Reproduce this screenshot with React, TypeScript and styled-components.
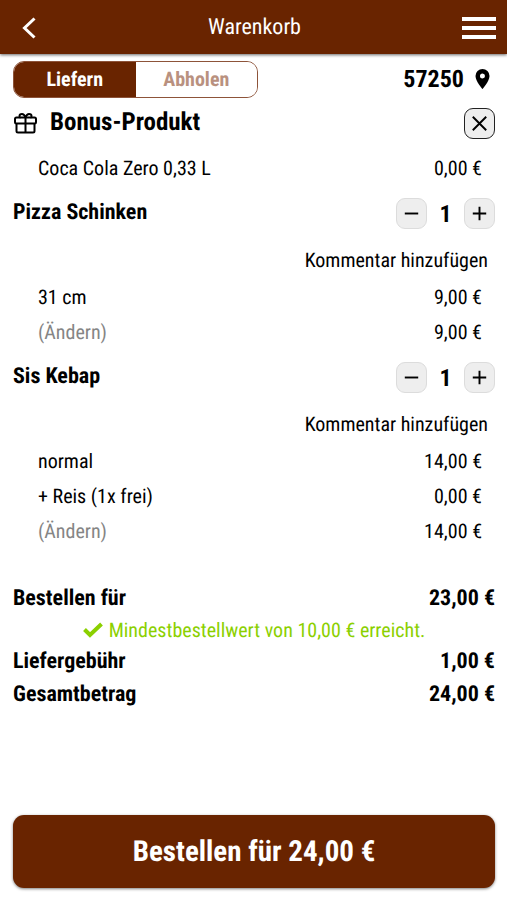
import React, { useState } from "react";
import styled, { createGlobalStyle, css } from "styled-components";

const BROWN = "#692400";
const FONT = '"Roboto Condensed", "Liberation Sans Narrow", Roboto, sans-serif';

const GlobalStyle = createGlobalStyle`
  *, *::before, *::after { box-sizing: border-box; }
  body { margin: 0; background: #fff; color: #000; font-family: ${FONT}; font-size: 20px; text-rendering: geometricPrecision; }
  button { font: inherit; color: inherit; text-rendering: inherit; margin: 0; padding: 0; border: 0; background: none; cursor: pointer; }
  h1, h2, ul, dl, dd, p { margin: 0; padding: 0; }
`;

const Page = styled.div`
  min-height: 100vh;
  display: flex;
  flex-direction: column;
`;

const Header = styled.header`
  height: 54px;
  padding: 2px 10px 0 12px;
  display: grid;
  grid-template-columns: 36px 1fr 36px;
  align-items: center;
  background: ${BROWN};
  color: #fff;
  box-shadow: 0 1px 3px rgba(0, 0, 0, 0.6);
`;

const Title = styled.h1`
  font-size: 22px;
  line-height: 28px;
  font-weight: 400;
  text-align: center;
`;

const IconButton = styled.button`
  height: 36px;
  display: flex;
  align-items: center;
  justify-content: center;
`;

const Main = styled.main`
  flex: 1;
  display: flex;
  flex-direction: column;
  padding: 7px 12px 12px 13px;
`;

const TopBar = styled.div`
  display: flex;
  align-items: center;
  justify-content: space-between;
`;

const Toggle = styled.div`
  display: grid;
  grid-template-columns: 1fr 1fr;
  width: 245px;
  height: 37px;
  border: 1px solid #8d5339;
  border-radius: 11px;
  overflow: hidden;
`;

const ToggleOption = styled.button<{ $active: boolean }>`
  padding-bottom: 2px;
  font-weight: 700;
  ${({ $active }) =>
    $active
      ? css`
          background: ${BROWN};
          color: #fff;
        `
      : css`
          background: #fff;
          color: #b9917f;
        `}
`;

const Location = styled.button`
  display: flex;
  align-items: center;
  gap: 7px;
  padding: 0 1px 1px 0;
  font-size: 24px;
  font-weight: 700;
`;

const Item = styled.section`
  margin-bottom: 4px;
`;

const ItemHead = styled.div<{ $tall?: boolean }>`
  height: ${({ $tall }) => ($tall ? 50 : 49)}px;
  margin-bottom: ${({ $tall }) => ($tall ? 2 : 0)}px;
  display: flex;
  align-items: center;
  justify-content: space-between;
`;

const ItemName = styled.h2<{ $large?: boolean }>`
  display: flex;
  align-items: center;
  gap: 12px;
  padding-bottom: ${({ $large }) => ($large ? 0 : 1)}px;
  font-size: ${({ $large }) => ($large ? 25 : 22)}px;
  line-height: 28px;
  font-weight: 700;
`;

const Stepper = styled.div`
  display: grid;
  grid-template-columns: 31px 37px 31px;
  align-items: center;
  text-align: center;
  font-size: 24px;
  font-weight: 700;
`;

const SquareButton = styled.button<{ $outlined?: boolean }>`
  width: 31px;
  height: 31px;
  display: flex;
  align-items: center;
  justify-content: center;
  border: 1px solid ${({ $outlined }) => ($outlined ? "#222" : "#dcdcdc")};
  border-radius: 9px;
  background: #eee;
  color: #000;
`;

const CommentRow = styled.div`
  height: 41px;
  padding: 2px 7px 0 0;
  display: flex;
  align-items: center;
  justify-content: flex-end;
`;

const Options = styled.ul`
  list-style: none;
  padding: 0 13px 0 25px;
`;

const Option = styled.li`
  height: 35px;
  display: flex;
  align-items: center;
  justify-content: space-between;
`;

const ChangeButton = styled.button`
  color: #858585;
`;

const Totals = styled.dl`
  margin-top: 30px;
`;

const TotalRow = styled.div`
  height: 33px;
  display: flex;
  align-items: center;
  justify-content: space-between;
  font-size: 22px;
  font-weight: 700;
`;

const MinimumNote = styled.div`
  height: 30px;
  display: flex;
  align-items: center;
  justify-content: center;
  gap: 6px;
  color: #8bd000;
`;

const OrderButton = styled.button`
  margin-top: auto;
  height: 73px;
  border-radius: 11px;
  background: ${BROWN};
  color: #fff;
  font-size: 29px;
  font-weight: 700;
  box-shadow: 0 1px 3px rgba(0, 0, 0, 0.5);
`;

const GiftIcon = () => (
  <svg width="25" height="25" viewBox="0 0 25 25" fill="none" stroke="currentColor" strokeWidth="2" strokeLinejoin="round" aria-hidden="true">
    <rect x="2" y="6.500" width="21" height="6" rx="1.500" />
    <path d="M3.500 12.500v7.500a1.500 1.500 0 0 0 1.500 1.500h15a1.500 1.500 0 0 0 1.500-1.500v-7.500M12.500 6.500v15" />
    <path d="M12.500 6.500C11.500 4 10.500 3 9 3S6.500 4 6.500 5s.5 1.500 1 1.500M12.500 6.500C13.500 4 14.500 3 16 3s2.500 1 2.500 2-.5 1.500-1 1.500" />
  </svg>
);

const PinIcon = () => (
  <svg width="23" height="24" viewBox="0 0 23 24" aria-hidden="true">
    <path fill="currentColor" fillRule="evenodd" d="M11.500 2A7 7 0 0 0 4.500 9c0 5.200 7 13 7 13s7-7.800 7-13a7 7 0 0 0-7-7Zm0 9.500a2.500 2.500 0 1 1 0-5 2.500 2.500 0 0 1 0 5Z" />
  </svg>
);

const StrokeIcon = ({ d, size, width }: { d: string; size: number; width: number }) => (
  <svg width={size} height={size} viewBox="0 0 24 24" fill="none" stroke="currentColor" strokeWidth={width} aria-hidden="true">
    <path d={d} />
  </svg>
);

type Line = { label: string; price: string; change?: boolean };

const initialItems: { name: string; quantity: number; lines: Line[] }[] = [
  {
    name: "Pizza Schinken",
    quantity: 1,
    lines: [
      { label: "31 cm", price: "9,00 €" },
      { label: "(Ändern)", price: "9,00 €", change: true },
    ],
  },
  {
    name: "Sis Kebap",
    quantity: 1,
    lines: [
      { label: "normal", price: "14,00 €" },
      { label: "+ Reis (1x frei)", price: "0,00 €" },
      { label: "(Ändern)", price: "14,00 €", change: true },
    ],
  },
];

function CartItem({ name, quantity, lines }: (typeof initialItems)[number]) {
  const [count, setCount] = useState(quantity);
  return (
    <Item>
      <ItemHead>
        <ItemName>{name}</ItemName>
        <Stepper>
          <SquareButton aria-label={`${name} verringern`} onClick={() => setCount(Math.max(0, count - 1))}>
            <StrokeIcon d="M5 12h14" size={23} width={2} />
          </SquareButton>
          <span>{count}</span>
          <SquareButton aria-label={`${name} erhöhen`} onClick={() => setCount(count + 1)}>
            <StrokeIcon d="M5 12h14M12 5v14" size={23} width={2} />
          </SquareButton>
        </Stepper>
      </ItemHead>
      <CommentRow>
        <button>Kommentar hinzufügen</button>
      </CommentRow>
      <Options>
        {lines.map((line) => (
          <Option key={line.label}>
            {line.change ? <ChangeButton>{line.label}</ChangeButton> : <span>{line.label}</span>}
            <span>{line.price}</span>
          </Option>
        ))}
      </Options>
    </Item>
  );
}

export default function App() {
  const [mode, setMode] = useState("Liefern");
  return (
    <Page>
      <GlobalStyle />
      <Header>
        <IconButton aria-label="Zurück">
          <svg width="24" height="24" viewBox="0 0 24 24" fill="none" stroke="currentColor" strokeWidth="3" aria-hidden="true">
            <path d="M16.500 2.500 6.500 12 16.500 21.500" />
          </svg>
        </IconButton>
        <Title>Warenkorb</Title>
        <IconButton aria-label="Menü">
          <svg width="34" height="24" viewBox="0 0 34 24" fill="currentColor" aria-hidden="true">
            <path d="M0 1h34v4H0zM0 10h34v4H0zM0 19h34v4H0z" />
          </svg>
        </IconButton>
      </Header>
      <Main>
        <TopBar>
          <Toggle role="group" aria-label="Bestellart">
            {["Liefern", "Abholen"].map((option) => (
              <ToggleOption key={option} $active={mode === option} aria-pressed={mode === option} onClick={() => setMode(option)}>
                {option}
              </ToggleOption>
            ))}
          </Toggle>
          <Location>
            57250
            <PinIcon />
          </Location>
        </TopBar>
        <Item>
          <ItemHead $tall>
            <ItemName $large>
              <GiftIcon />
              Bonus-Produkt
            </ItemName>
            <SquareButton $outlined aria-label="Bonus-Produkt entfernen">
              <StrokeIcon d="m5 5 14 14M19 5 5 19" size={23} width={2} />
            </SquareButton>
          </ItemHead>
          <Options>
            <Option>
              <span>Coca Cola Zero 0,33 L</span>
              <span>0,00 €</span>
            </Option>
          </Options>
        </Item>
        {initialItems.map((item) => (
          <CartItem key={item.name} {...item} />
        ))}
        <Totals>
          <TotalRow>
            <dt>Bestellen für</dt>
            <dd>23,00 €</dd>
          </TotalRow>
          <MinimumNote>
            <svg width="20" height="20" viewBox="0 0 20 20" fill="none" stroke="currentColor" strokeWidth="4" aria-hidden="true">
              <path d="m1.500 9.500 5.500 5.500L18.500 4" />
            </svg>
            <dd>Mindestbestellwert von 10,00 € erreicht.</dd>
          </MinimumNote>
          <TotalRow>
            <dt>Liefergebühr</dt>
            <dd>1,00 €</dd>
          </TotalRow>
          <TotalRow>
            <dt>Gesamtbetrag</dt>
            <dd>24,00 €</dd>
          </TotalRow>
        </Totals>
        <OrderButton>Bestellen für 24,00 €</OrderButton>
      </Main>
    </Page>
  );
}
